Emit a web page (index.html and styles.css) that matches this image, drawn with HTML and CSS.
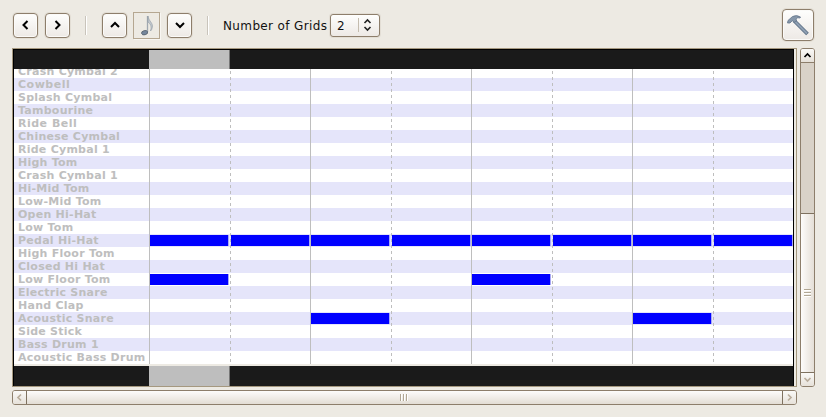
FILE: index.html
```
<!DOCTYPE html>
<html lang="en">
<head>
<meta charset="utf-8">
<title>Drum Editor</title>
<link rel="stylesheet" href="styles.css">
</head>
<body>
<div class="toolbar">
  <button class="btn"><svg width="24" height="24"><path d="M13.500 8L9.500 12L13.500 16"/></svg></button>
  <button class="btn next"><svg width="24" height="24"><path d="M9.500 8L13.500 12L9.500 16"/></svg></button>
  <span class="sep"></span>
  <button class="btn up"><svg width="24" height="24"><path d="M8 14L12 10L16 14"/></svg></button>
  <div class="note-box"><svg width="25" height="25" viewBox="0 0 25 25"><path class="stem" d="M13.500 3V19"/><path class="flag" d="M14 3C14.500 8 19.500 10 18.300 14.500Q17.800 17 16.500 18Q18.500 12 14 9Z"/><ellipse class="head" cx="10.600" cy="19.700" rx="3.100" ry="2.100" transform="rotate(-15 10.600 19.700)"/></svg></div>
  <button class="btn"><svg width="24" height="24"><path d="M8 10L12 14L16 10"/></svg></button>
  <span class="sep"></span>
  <label class="grids-label">Number of Grids</label>
  <div class="spinner"><span class="value">2</span><svg width="20" height="20"><path d="M5.500 8L8.500 5L11.500 8M5.500 12L8.500 15L11.500 12"/></svg></div>
  <button class="btn tool"><svg width="30" height="30" viewBox="0 0 30 30"><path class="handle" d="M11 10.500L24.500 24"/><path class="handle-light" d="M12 11.500L24 23.500"/><path class="hammer" d="M4.500 13L5 10.500L9.500 6.500Q13.500 4.500 17.500 7L17 8Q14.500 7 13 9L13.500 11L11 12.500L9.500 10.500L7 13Z"/></svg></button>
</div>
<div class="main">
  <div class="frame">
    <div class="editor">
      <div class="band top"><i></i></div>
      <div class="rows" id="rows"></div>
      <div class="gap"></div>
      <div class="band"><i></i></div>
    </div>
  </div>
  <div class="vbar">
    <div class="arrow"><svg width="13" height="13"><path d="M3.500 8L6.500 5L9.500 8"/></svg></div>
    <div class="trough"></div>
    <div class="thumb"><i></i><i></i><i></i></div>
    <div class="arrow off"><svg width="13" height="13"><path d="M3.500 5L6.500 8L9.500 5"/></svg></div>
  </div>
</div>
<div class="hbar">
  <div class="arrow off"><svg width="13" height="13"><path d="M8 3.500L5 6.500L8 9.500"/></svg></div>
  <div class="thumb"><i></i><i></i><i></i></div>
  <div class="arrow off"><svg width="13" height="13"><path d="M5 3.500L8 6.500L5 9.500"/></svg></div>
</div>
<script src="script.js"></script>
</body>
</html>
```
FILE: styles.css
```
* { box-sizing: border-box; }
body { margin: 0; width: 826px; height: 417px; overflow: hidden; background: #edeae3; font: 12px "DejaVu Sans", sans-serif; color: #111; }
svg { display: block; flex: none; fill: none; stroke: #000; stroke-width: 2; }
.toolbar { height: 48px; padding: 2px 12px 0 13px; display: flex; align-items: center; }
.btn { width: 25px; height: 25px; padding: 0; border: 1px solid #8d7e6b; border-radius: 4px; background: linear-gradient(#fefefd, #ede9e5); box-shadow: 0 0 0 1px #e3ded5, inset 0 0 0 1px #fbfaf8; display: flex; align-items: center; justify-content: center; flex: none; }
.next { margin-left: 7px; }
.up { margin-right: 6px; }
.sep { width: 2px; height: 19px; background: #c9c4bb; border-right: 1px solid #fff; margin: 0 15px; flex: none; }
.note-box { width: 27px; height: 27px; margin: 1px 7px 0 0; border: 1px solid #b5a791; box-shadow: 1px 1px 0 #f8f6f2; flex: none; }
.stem { stroke: #a0a8b0; stroke-width: 1.3; }
.flag { stroke: #8f98a2; stroke-width: .6; fill: #c2c8ce; }
.head { stroke: #56616e; stroke-width: .8; fill: #75869b; }
.grids-label { width: 107px; margin-left: -1px; padding-top: 2px; white-space: nowrap; letter-spacing: .37px; flex: none; }
.spinner { width: 50px; height: 23px; border: 1px solid #8d7e6b; border-radius: 3px; background: linear-gradient(#fefefd, #ede9e5); box-shadow: 0 0 0 1px #e3ded5; display: flex; align-items: center; flex: none; }
.spinner .value { width: 29px; height: 14px; line-height: 16px; padding-left: 6px; border-right: 1px solid #c4bcae; }
.spinner svg { stroke: #222; stroke-width: 1.6; }
.tool { width: 32px; height: 32px; margin-left: auto; }
.handle { stroke: #5e7186; stroke-width: 3.8; }
.handle-light { stroke: #8e9fb3; stroke-width: 2; }
.hammer { stroke: #63758a; stroke-width: .8; fill: #8697aa; }
.main { display: flex; height: 339px; padding-left: 12px; }
.frame { width: 785px; border: 1px solid #a5987f; padding-right: 2px; }
.editor { height: 337px; border-left: 1px solid #000; border-right: 1px solid #000; }
.band { height: 20px; background: #1a1a1a; padding-left: 135px; }
.band.top { border-top: 1px solid #000; }
.band i { display: block; width: 81px; height: 100%; background: #bebebe; border-right: 1px solid #777; }
.rows { height: 295px; display: flex; flex-direction: column; justify-content: flex-end; overflow: hidden; background: #fff; }
.gap { height: 2px; background: #edeae3; }
.row { height: 13px; flex: none; display: grid; grid-template-columns: 135px 644px; }
.row:nth-child(even) { background: #e5e5fa; }
.name { font: bold 11px/13px "DejaVu Sans", sans-serif; color: #bebebe; letter-spacing: .25px; padding-left: 4px; white-space: nowrap; }
.row:nth-child(2) .name, .row:nth-child(5) .name { letter-spacing: .5px; }
.cells { display: grid; grid-template-columns: 81px 80px 81px 80px 81px 80px 81px 79px; }
.cell { border-left: 1px solid #bebebe; padding: 1px 0; }
.cell.dash { border-left: 0; padding-left: 1px; background-repeat: no-repeat; background-size: 1px 24px; background-image: repeating-linear-gradient(transparent 0 3px, #bebebe 3px 6px); }
.hit { height: 11px; width: 78px; background: #00f; box-shadow: 1px 0 #a9a9f5; }
.vbar { width: 15px; margin-left: 3px; border: 1px solid #8d7e6b; border-radius: 3px; background: #f4f1ed; overflow: hidden; display: flex; flex-direction: column; }
.arrow { width: 13px; height: 13px; background: linear-gradient(#faf9f7, #e6e1d9); flex: none; }
.arrow svg { stroke-width: 1.7; }
.off svg { stroke: #b9ad9c; }
.trough { height: 151px; background: #d9d2c8; border-top: 1px solid #8d7e6b; }
.thumb { display: flex; align-items: center; justify-content: center; gap: 1px; }
.vbar .thumb { flex: 1; flex-direction: column; background: linear-gradient(90deg, #fdfcfb, #e5dfd7); border-top: 1px solid #7e715f; border-bottom: 1px solid #7e715f; }
.vbar .thumb i { width: 7px; height: 2px; background: #b1a794; border-bottom: 1px solid #fff; }
.hbar { width: 785px; height: 15px; margin: 3px 0 0 12px; border: 1px solid #8d7e6b; border-radius: 3px; background: #f4f1ed; overflow: hidden; display: flex; }
.hbar .thumb { flex: 1; padding-right: 2px; background: linear-gradient(#fdfcfb, #e3ddd4); border-left: 1px solid #7e715f; border-right: 1px solid #7e715f; }
.hbar .thumb i { width: 2px; height: 7px; background: #b1a794; border-right: 1px solid #fff; }
```
FILE: script.js
```
const names = ['Crash Cymbal 2', 'Cowbell', 'Splash Cymbal', 'Tambourine', 'Ride Bell', 'Chinese Cymbal', 'Ride Cymbal 1', 'High Tom', 'Crash Cymbal 1', 'Hi-Mid Tom', 'Low-Mid Tom', 'Open Hi-Hat', 'Low Tom', 'Pedal Hi-Hat', 'High Floor Tom', 'Closed Hi Hat', 'Low Floor Tom', 'Electric Snare', 'Hand Clap', 'Acoustic Snare', 'Side Stick', 'Bass Drum 1', 'Acoustic Bass Drum'];
const hits = { 'Pedal Hi-Hat': [0, 1, 2, 3, 4, 5, 6, 7], 'Low Floor Tom': [0, 4], 'Acoustic Snare': [2, 6] };
document.getElementById('rows').innerHTML = names.map((name, r) => {
  let cells = '';
  for (let c = 0; c < 8; c++) {
    const hit = (hits[name] || []).includes(c) ? '<div class="hit"></div>' : '';
    // The dash pattern has a 6px period that continues across 13px rows.
    const phase = c % 2 ? ` dash" style="background-position:0 ${-((r * 13 + 3) % 6)}px` : '';
    cells += `<div class="cell${phase}">${hit}</div>`;
  }
  return `<div class="row"><div class="name">${name}</div><div class="cells">${cells}</div></div>`;
}).join('');
```
